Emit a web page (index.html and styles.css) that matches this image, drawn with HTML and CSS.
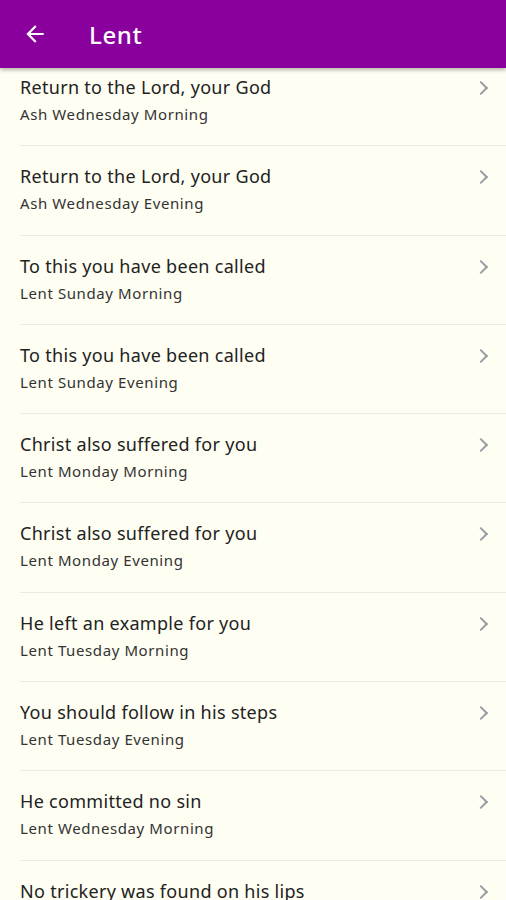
FILE: index.html
```html
<!DOCTYPE html>
<html lang="en">
<head>
<meta charset="UTF-8">
<meta name="viewport" content="width=device-width, initial-scale=1.0">
<title>Lent</title>
<link rel="stylesheet" href="styles.css">
</head>
<body>
<div class="app-bar">
    <svg class="back" width="26" height="26" viewBox="0 0 24 24">
        <path d="M20 11H7.83l5.59-5.59L12 4l-8 8 8 8 1.41-1.41L7.83 13H20v-2z" fill="#fff"/>
    </svg>
    <h1>Lent</h1>
</div>
<ul class="list">
    <li><div class="text"><div class="title">Return to the Lord, your God</div><div class="sub">Ash Wednesday Morning</div></div><span class="chev"></span></li>
    <li><div class="text"><div class="title">Return to the Lord, your God</div><div class="sub">Ash Wednesday Evening</div></div><span class="chev"></span></li>
    <li><div class="text"><div class="title">To this you have been called</div><div class="sub">Lent Sunday Morning</div></div><span class="chev"></span></li>
    <li><div class="text"><div class="title">To this you have been called</div><div class="sub">Lent Sunday Evening</div></div><span class="chev"></span></li>
    <li><div class="text"><div class="title">Christ also suffered for you</div><div class="sub">Lent Monday Morning</div></div><span class="chev"></span></li>
    <li><div class="text"><div class="title">Christ also suffered for you</div><div class="sub">Lent Monday Evening</div></div><span class="chev"></span></li>
    <li><div class="text"><div class="title">He left an example for you</div><div class="sub">Lent Tuesday Morning</div></div><span class="chev"></span></li>
    <li><div class="text"><div class="title">You should follow in his steps</div><div class="sub">Lent Tuesday Evening</div></div><span class="chev"></span></li>
    <li><div class="text"><div class="title">He committed no sin</div><div class="sub">Lent Wednesday Morning</div></div><span class="chev"></span></li>
    <li><div class="text"><div class="title">No trickery was found on his lips</div></div><span class="chev"></span></li>
</ul>
</body>
</html>
```

FILE: styles.css
```css
html, body {
    margin: 0;
    padding: 0;
    height: 900px;
    overflow: hidden;
    background: #fefef2;
    font-family: "Noto Sans", sans-serif;
}
.app-bar {
    position: relative;
    z-index: 2;
    height: 68px;
    background: #8a009c;
    display: flex;
    align-items: center;
    padding-left: 22px;
    box-shadow: 0 2px 4px rgba(0, 0, 0, 0.3);
}
.back {
    margin-right: 41px;
}
.app-bar h1 {
    margin: 0;
    color: #fff;
    font-size: 24px;
    font-weight: 500;
    letter-spacing: 0.6px;
}
.list {
    list-style: none;
    margin: -11px 0 0 0;
    padding: 0;
}
.list li {
    height: 89.3px;
    box-sizing: border-box;
    margin-left: 20px;
    padding: 17px 20px 0 0;
    border-bottom: 1px solid #ebebde;
    display: flex;
    align-items: flex-start;
}
.text {
    flex: 1;
}
.title {
    font-size: 18px;
    color: #222;
    line-height: 26px;
    letter-spacing: 0.3px;
}
.sub {
    font-size: 15px;
    color: #333;
    line-height: 24px;
    margin-top: 2px;
    letter-spacing: 0.6px;
}
.chev {
    width: 8px;
    height: 8px;
    border-top: 2px solid #9b9ba6;
    border-right: 2px solid #9b9ba6;
    transform: rotate(45deg);
    margin-top: 9px;
}
```
